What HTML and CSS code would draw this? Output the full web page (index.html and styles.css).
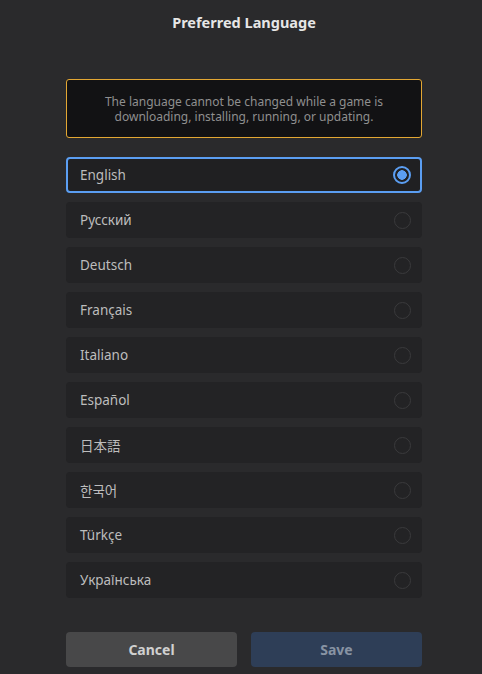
FILE: index.html
```html
<!DOCTYPE html>
<html lang="en">
<head>
  <meta charset="UTF-8" />
  <title>Preferred Language</title>
  <link rel="stylesheet" href="styles.css">
</head>
<body>
  <div class="dialog">
    <h2 class="title">Preferred Language</h2>

    <div class="notice">
      The language cannot be changed while a game is
      downloading, installing, running, or updating.
    </div>

    <ul class="langs">
      <li class="lang selected"><span>English</span><i class="radio"></i></li>
      <li class="lang"><span>Русский</span><i class="radio"></i></li>
      <li class="lang"><span>Deutsch</span><i class="radio"></i></li>
      <li class="lang"><span>Français</span><i class="radio"></i></li>
      <li class="lang"><span>Italiano</span><i class="radio"></i></li>
      <li class="lang"><span>Español</span><i class="radio"></i></li>
      <li class="lang"><span>日本語</span><i class="radio"></i></li>
      <li class="lang"><span>한국어</span><i class="radio"></i></li>
      <li class="lang"><span>Türkçe</span><i class="radio"></i></li>
      <li class="lang"><span>Українська</span><i class="radio"></i></li>
    </ul>

    <div class="actions">
      <button class="btn cancel">Cancel</button>
      <button class="btn save">Save</button>
    </div>
  </div>
</body>
</html>
```

FILE: styles.css
```css
body {
  margin: 0;
  background-color: #2a2a2c;
  font-family: "Noto Sans", "Noto Sans CJK JP", "Noto Sans CJK KR", sans-serif;
  color: #c8c8c8;
}

.dialog {
  padding: 0 60px 0 66px;
}

.title {
  margin: 0;
  padding-top: 12px;
  height: 68px;
  box-sizing: border-box;
  text-align: center;
  font-size: 14.5px;
  font-weight: 700;
  color: #e6e6e6;
}

.notice {
  height: 59px;
  box-sizing: border-box;
  border: 1px solid #e3a733;
  border-radius: 3px;
  background: #121214;
  color: #8f8f8f;
  font-size: 12px;
  line-height: 15px;
  text-align: center;
  padding: 14px 20px 0;
  margin-top: 11px;
}

.langs {
  list-style: none;
  margin: 19px 0 0;
  padding: 0;
  display: flex;
  flex-direction: column;
  gap: 9px;
}

.lang {
  height: 36px;
  box-sizing: border-box;
  display: flex;
  align-items: center;
  justify-content: space-between;
  padding: 0 9px 0 12px;
  background: #232325;
  border: 2px solid transparent;
  border-radius: 4px;
  font-size: 13.5px;
  color: #bdbdbd;
}

.lang.selected {
  border-color: #5b9ef2;
  background: #202022;
}

.radio {
  width: 15px;
  height: 15px;
  border: 1.5px solid #3a3a3c;
  border-radius: 50%;
  box-sizing: content-box;
}

.selected .radio {
  border: 2px solid #5b9ef2;
  width: 14px;
  height: 14px;
  background: radial-gradient(circle, #5b9ef2 0 4.5px, transparent 5px);
}

.actions {
  display: flex;
  gap: 14px;
  margin-top: 34px;
}

.btn {
  flex: 1;
  height: 35px;
  border: none;
  border-radius: 4px;
  font-family: inherit;
  font-size: 14px;
  font-weight: 700;
}

.cancel {
  background: #484849;
  color: #d0d0d0;
}

.save {
  background: #2e3e57;
  color: #8893a3;
}
```
